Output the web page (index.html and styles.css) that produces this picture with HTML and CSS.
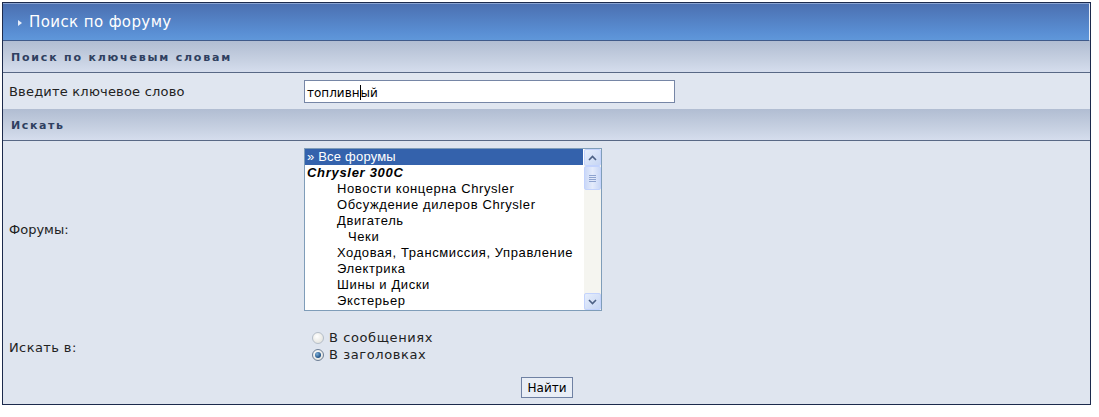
FILE: index.html
```html
<!DOCTYPE html>
<html lang="ru">
<head>
<meta charset="utf-8">
<title>Поиск по форуму</title>
<link rel="stylesheet" href="styles.css">
</head>
<body>
<div class="box">
  <div class="head">
    <span class="tri"></span>
    <span class="head-title">Поиск по форуму</span>
  </div>
  <div class="sect">Поиск по ключевым словам</div>
  <div class="row kw">
    <div class="label label-kw">Введите ключевое слово</div>
    <div class="ctrl"><div class="input">топливн<span class="caret"></span>ый</div></div>
  </div>
  <div class="sect sect-search">Искать</div>
  <div class="content">
    <div class="row forums">
      <div class="label label-forums">Форумы:</div>
      <div class="ctrl">
        <div class="listbox">
          <div class="opts">
            <div class="opt sel">» Все форумы</div>
            <div class="opt cat">Chrysler 300C</div>
            <div class="opt l1">Новости концерна Chrysler</div>
            <div class="opt l1">Обсуждение дилеров Chrysler</div>
            <div class="opt l1">Двигатель</div>
            <div class="opt l2">Чеки</div>
            <div class="opt l1">Ходовая, Трансмиссия, Управление</div>
            <div class="opt l1">Электрика</div>
            <div class="opt l1">Шины и Диски</div>
            <div class="opt l1">Экстерьер</div>
          </div>
          <div class="sbar">
            <div class="sbtn"><svg width="9" height="6" viewBox="0 0 9 6"><path d="M1 5 L4.5 1.5 L8 5" fill="none" stroke="#4d6185" stroke-width="1.6"/></svg></div>
            <div class="track">
              <div class="thumb"><span></span><span></span><span></span><span></span></div>
            </div>
            <div class="sbtn"><svg width="9" height="6" viewBox="0 0 9 6"><path d="M1 1 L4.5 4.5 L8 1" fill="none" stroke="#4d6185" stroke-width="1.6"/></svg></div>
          </div>
        </div>
      </div>
    </div>
    <div class="row searchin">
      <div class="label label-in">Искать в:</div>
      <div class="ctrl radios">
        <div class="radio-row"><span class="radio"></span><span>В сообщениях</span></div>
        <div class="radio-row"><span class="radio on"></span><span>В заголовках</span></div>
      </div>
    </div>
    <div class="btn-row"><button class="btn">Найти</button></div>
  </div>
</div>
</body>
</html>
```

FILE: styles.css
```css
html, body {
  margin: 0;
  padding: 0;
  background: #ffffff;
}
body {
  font-family: "DejaVu Sans", Verdana, sans-serif;
  font-size: 12px;
  color: #1e1e1e;
}
.box {
  box-sizing: border-box;
  width: 1089px;
  margin: 2px;
  border: 1px solid #1c2a4c;
  background: #dfe5ef;
}
.head {
  box-sizing: border-box;
  height: 38px;
  border-top: 1px solid #8aa4d2;
  border-right: 1px solid #e8eef8;
  border-bottom: 1px solid #3f5a8a;
  background: linear-gradient(#4b70b1, #5a8fd4 80%, #5f97da);
  display: flex;
  align-items: center;
  padding-left: 15px;
}
.tri {
  width: 0;
  height: 0;
  border-top: 3px solid transparent;
  border-bottom: 3px solid transparent;
  border-left: 4px solid #e8eefa;
  margin-right: 7px;
  margin-top: 1px;
}
.head-title {
  color: #ffffff;
  font-size: 15px;
  letter-spacing: 0.4px;
}
.sect {
  box-sizing: border-box;
  height: 32px;
  background: linear-gradient(#b1bdd2, #c6d0e1 60%, #d5dded);
  display: flex;
  align-items: center;
  padding-left: 8px;
  padding-top: 1px;
  font-size: 11px;
  font-weight: bold;
  letter-spacing: 1.8px;
  color: #2f3f60;
  border-bottom: 1px solid #586885;
}
.sect-search {
  letter-spacing: 1.6px;
}
.row {
  display: flex;
}
.label {
  width: 301px;
  flex: none;
  padding-left: 6px;
  box-sizing: border-box;
  display: flex;
  align-items: center;
  font-size: 13px;
  color: #222;
}
.label-kw {
  letter-spacing: 0.2px;
}
.label-forums {
  letter-spacing: 0;
}
.label-in {
  letter-spacing: 0.4px;
  padding-top: 3px;
}
.kw {
  height: 36px;
  background: #e0e6f0;
}
.kw .ctrl {
  display: flex;
  align-items: center;
  padding-top: 1px;
}
.input {
  box-sizing: border-box;
  width: 371px;
  height: 23px;
  border: 1px solid #7686a6;
  background: #ffffff;
  padding: 2px 0 0 2px;
  display: flex;
  align-items: center;
  font-size: 12px;
  color: #000;
}
.caret {
  display: inline-block;
  width: 1px;
  height: 15px;
  background: #000;
  margin: 0 0 1px 0;
}
.content {
  background: #dfe5ef;
}
.forums {
  padding: 7px 0 7px 0;
}
.listbox {
  box-sizing: border-box;
  width: 298px;
  height: 163px;
  border: 1px solid #7f9db9;
  background: #ffffff;
  display: flex;
}
.opts {
  flex: 1;
  font-family: "Liberation Sans", Arial, sans-serif;
  font-size: 13px;
  letter-spacing: 0.6px;
  color: #000;
}
.opt {
  height: 16px;
  line-height: 16px;
  white-space: nowrap;
  padding-left: 2px;
}
.opt.sel {
  background: #3462ac;
  color: #ffffff;
  margin-right: 1px;
  letter-spacing: 0.2px;
}
.opt.cat {
  font-weight: bold;
  font-style: italic;
  letter-spacing: 0.7px;
}
.opt.l1 {
  padding-left: 32px;
}
.opt.l2 {
  padding-left: 43px;
}
.sbar {
  width: 17px;
  flex: none;
  display: flex;
  flex-direction: column;
  background: #f3f3ee;
}
.sbtn {
  box-sizing: border-box;
  height: 17px;
  border: 1px solid #c3d3fd;
  border-radius: 2px;
  background: linear-gradient(135deg, #e6eefc, #c7d6f4);
  display: flex;
  align-items: center;
  justify-content: center;
}
.track {
  flex: 1;
  background: #f5f5f0;
}
.thumb {
  box-sizing: border-box;
  height: 24px;
  border: 1px solid #c3d3fd;
  border-radius: 2px;
  background: linear-gradient(90deg, #cad8f7, #e4ebfb 50%, #cad8f7);
  display: flex;
  flex-direction: column;
  align-items: center;
  justify-content: center;
  gap: 1px;
}
.thumb span {
  width: 7px;
  height: 1px;
  background: #8ea3cf;
}
.searchin {
  padding: 11px 0 6px 0;
}
.radios {
  padding-left: 8px;
  display: flex;
  flex-direction: column;
}
.radio-row {
  height: 17px;
  display: flex;
  align-items: center;
  gap: 5px;
  color: #222;
  font-size: 13px;
  letter-spacing: 0.6px;
}
.radio {
  box-sizing: border-box;
  width: 12px;
  height: 12px;
  border-radius: 50%;
  border: 1px solid #b5bec9;
  background: radial-gradient(circle at 40% 35%, #ffffff, #dcdcd6);
  display: flex;
  align-items: center;
  justify-content: center;
}
.radio.on {
  border-color: #6d7e95;
}
.radio.on::after {
  content: "";
  width: 6px;
  height: 6px;
  border-radius: 50%;
  background: radial-gradient(circle at 35% 35%, #7fb0d8, #1d4f84 70%);
}
.btn-row {
  display: flex;
  justify-content: center;
  padding: 8px 0 6px 0;
}
.btn {
  box-sizing: border-box;
  width: 52px;
  height: 21px;
  border: 1px solid #6f81a3;
  background: #e9eef6;
  font-family: "DejaVu Sans", Verdana, sans-serif;
  font-size: 12px;
  color: #000;
  padding: 0;
  margin-left: 1px;
}
```
